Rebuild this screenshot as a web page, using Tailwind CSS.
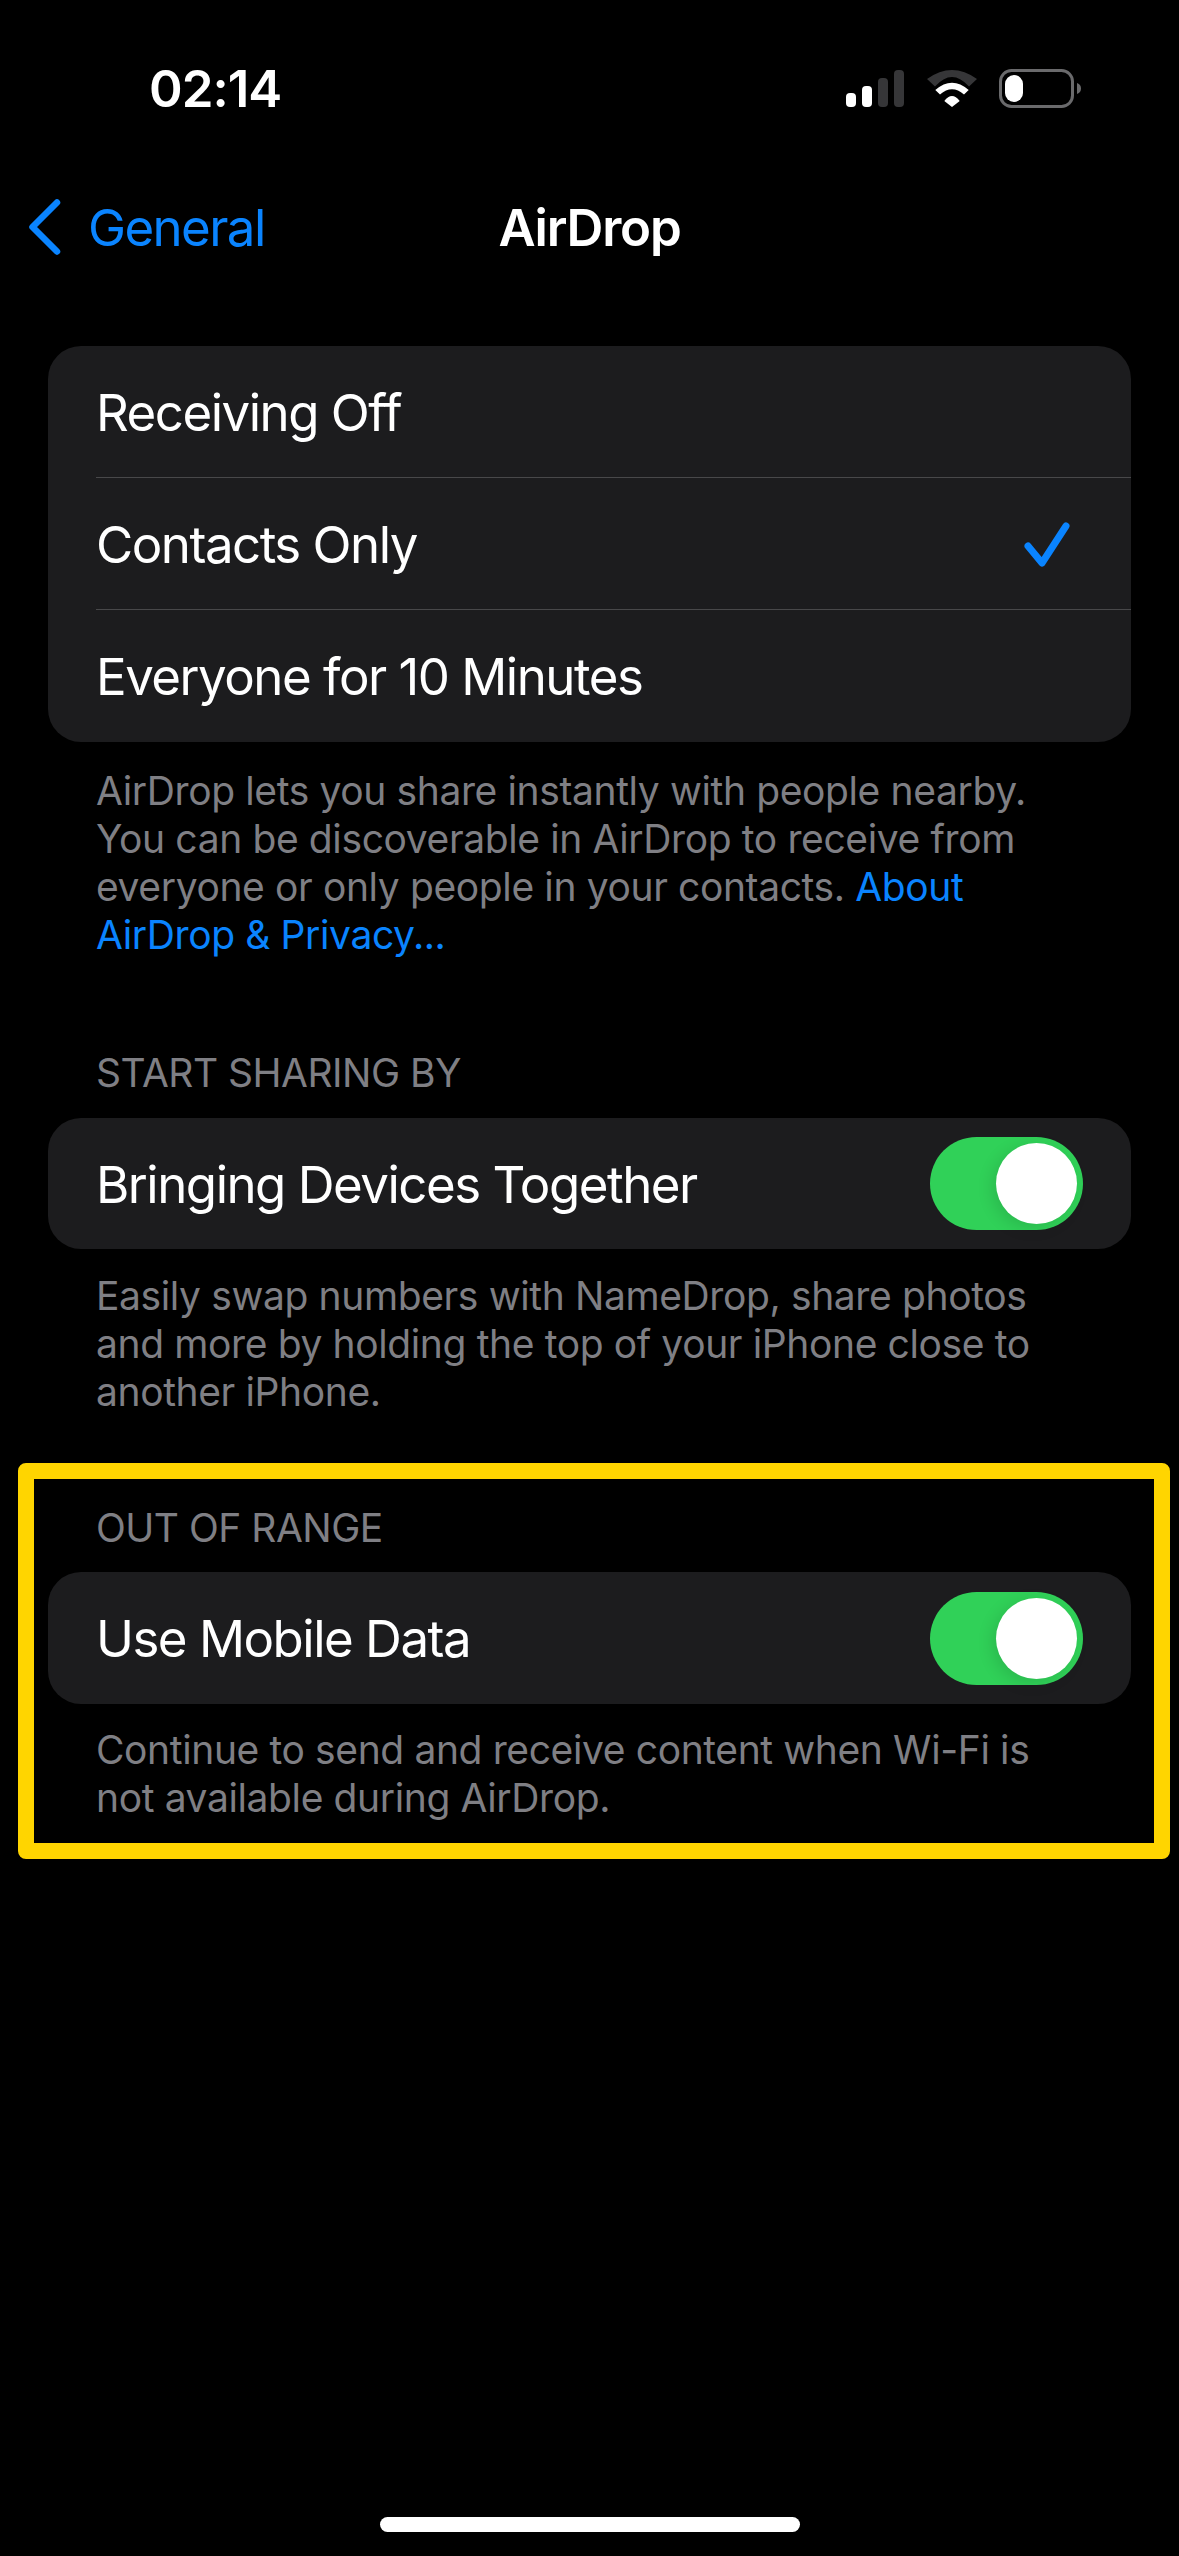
<!DOCTYPE html>
<html lang="en">
<head>
    <meta charset="UTF-8">
    <meta name="viewport" content="width=device-width, initial-scale=1.0">
    <title>AirDrop</title>
    <script src="https://cdn.jsdelivr.net/npm/@tailwindcss/browser@4"></script>
</head>
<body class="bg-black">
    <div class="w-[1179px] h-[2556px] flex flex-col bg-black text-white overflow-hidden font-['Inter',sans-serif]">
        <!-- Status bar -->
        <div class="h-[176px] flex items-center justify-between pl-[149px] pr-[98px]">
            <span class="text-[51px] leading-none font-semibold tracking-[-1px]">02:14</span>
            <div class="flex items-center">
                <svg width="58" height="37" viewBox="0 0 58 37" class="mr-[23px]">
                    <rect x="0" y="23" width="10" height="14" rx="4" fill="#fff"/>
                    <rect x="16" y="16" width="10" height="21" rx="4" fill="#fff"/>
                    <rect x="32" y="8" width="10" height="29" rx="4" fill="#363638"/>
                    <rect x="48" y="0" width="10" height="37" rx="4" fill="#363638"/>
                </svg>
                <svg width="50" height="37" viewBox="0 0 50 37" class="mr-[22px]">
                    <path d="M0 9Q25-9 50 9L42 16.5Q25-2.5 8 16.5Z" fill="#363638"/>
                    <path d="M8.3 20Q25 5.4 41.7 20L37 24.5Q25 14 13 24.5Z" fill="#fff"/>
                    <path d="M17.3 31Q25 21 32.7 31L25 37Z" fill="#fff"/>
                </svg>
                <svg width="82" height="39" viewBox="0 0 82 39">
                    <rect x="1.5" y="1.5" width="72" height="36" rx="11" fill="none" stroke="#6a6a6c" stroke-width="3"/>
                    <rect x="6" y="6" width="18" height="27" rx="9" fill="#fff"/>
                    <path d="M78 14C81 15 82 17 82 19.5C82 22 81 24 78 25Z" fill="#6a6a6c"/>
                </svg>
            </div>
        </div>

        <!-- Nav bar -->
        <div class="relative h-[102px] flex items-center justify-center">
            <div class="absolute left-[28px] top-0 h-full flex items-center text-[#0a84ff]">
                <svg width="34" height="58" viewBox="0 0 34 58" class="mr-[26px]">
                    <path d="M29 4.5L4.5 29L29 53.5" fill="none" stroke="#0a84ff" stroke-width="6.5" stroke-linecap="round" stroke-linejoin="round"/>
                </svg>
                <span class="text-[51px] leading-none tracking-[-1.6px]">General</span>
            </div>
            <span class="text-[51px] leading-none font-semibold tracking-[-1.2px]">AirDrop</span>
        </div>

        <!-- Receive options -->
        <div class="px-[48px] mt-[68px]">
            <div class="bg-[#1c1c1e] rounded-[33px] pl-[48px] text-[51px] tracking-[-1.5px]">
                <div class="h-[132px] pt-[3px] flex items-center border-b border-[#48484a]">Receiving Off</div>
                <div class="h-[132px] pt-[3px] flex items-center justify-between border-b border-[#48484a] pr-[61px]">
                    <span>Contacts Only</span>
                    <svg width="46" height="46" viewBox="0 0 46 46">
                        <path d="M4 24L18 41L42 4" fill="none" stroke="#0a84ff" stroke-width="7" stroke-linecap="round" stroke-linejoin="round"/>
                    </svg>
                </div>
                <div class="h-[132px] pt-[3px] flex items-center">Everyone for 10 Minutes</div>
            </div>
            <p class="mt-[25px] px-[48px] text-[39px] leading-[48px] tracking-[-0.38px] text-[#7f7f84]">AirDrop lets you share instantly with people nearby. You can be discoverable in AirDrop to receive from everyone or only people in your contacts. <span class="text-[#0a84ff]">About AirDrop &amp; Privacy...</span></p>
        </div>

        <!-- Start sharing by -->
        <div class="px-[48px] mt-[90px]">
            <p class="px-[48px] text-[39px] leading-[48px] tracking-[-0.5px] text-[#7f7f84]">START SHARING BY</p>
            <div class="mt-[21px] h-[131px] pt-[3px] bg-[#1c1c1e] rounded-[33px] pl-[48px] pr-[48px] flex items-center justify-between text-[51px] tracking-[-1.5px]">
                <span>Bringing Devices Together</span>
                <div class="w-[153px] h-[93px] -mt-[3px] rounded-full bg-[#30d158] flex items-center justify-end pr-[6px]">
                    <div class="w-[81px] h-[81px] rounded-full bg-white shadow-[-4px_4px_16px_rgba(0,0,0,0.12)]"></div>
                </div>
            </div>
            <p class="mt-[23px] px-[48px] text-[39px] leading-[48px] tracking-[-0.38px] text-[#7f7f84]">Easily swap numbers with NameDrop, share photos and more by holding the top of your iPhone close to another iPhone.</p>
        </div>

        <!-- Out of range, highlighted -->
        <div class="mt-[47px] ml-[18px] mr-[9px] border-[16px] border-[#ffd500] rounded-[8px] pt-[25px] pb-[21px] pl-[14px] pr-[23px]">
            <p class="px-[48px] text-[39px] leading-[48px] tracking-[-0.5px] text-[#7f7f84]">OUT OF RANGE</p>
            <div class="mt-[20px] h-[132px] pt-[3px] bg-[#1c1c1e] rounded-[33px] pl-[48px] pr-[48px] flex items-center justify-between text-[51px] tracking-[-1.5px]">
                <span>Use Mobile Data</span>
                <div class="w-[153px] h-[93px] -mt-[3px] rounded-full bg-[#30d158] flex items-center justify-end pr-[6px]">
                    <div class="w-[81px] h-[81px] rounded-full bg-white shadow-[-4px_4px_16px_rgba(0,0,0,0.12)]"></div>
                </div>
            </div>
            <p class="mt-[22px] pl-[48px] pr-[48px] text-[39px] leading-[48px] tracking-[-0.38px] text-[#7f7f84]">Continue to send and receive content when Wi-Fi is not available during AirDrop.</p>
        </div>

        <!-- Home indicator -->
        <div class="mt-auto mb-[24px] mx-auto w-[420px] h-[15px] rounded-full bg-white"></div>
    </div>
</body>
</html>
